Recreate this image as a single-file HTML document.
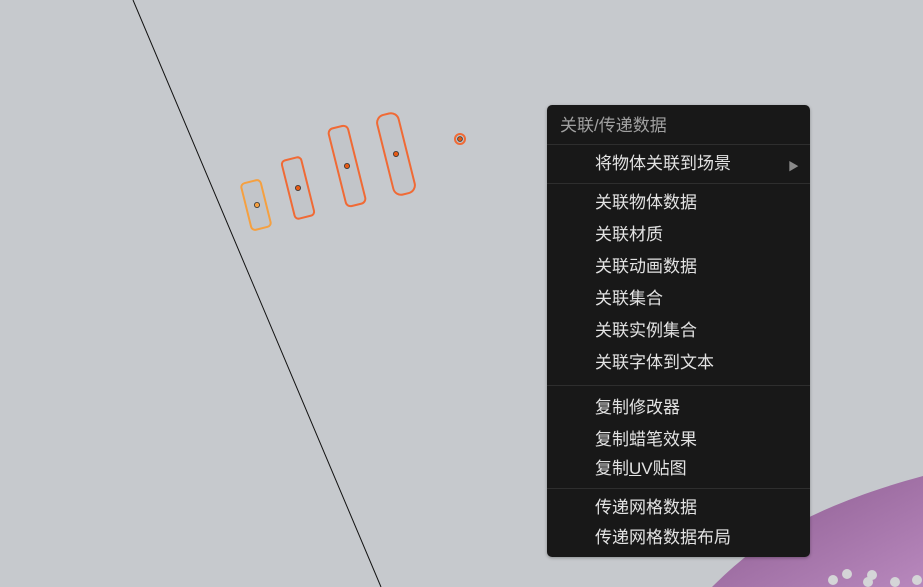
<!DOCTYPE html><html><head><meta charset="utf-8"><style>
body{margin:0;width:923px;height:587px;overflow:hidden;background:#c6c9cd;position:relative;font-family:"Liberation Sans","Noto Sans CJK SC",sans-serif}
.menu{position:absolute;left:547px;top:105px;width:263px;height:452px;background:#181818;border-radius:5px;box-shadow:0 1px 3px rgba(0,0,0,.3)}
.t{position:absolute;left:48px;color:#e2e2e2;font-size:17px;line-height:20px;white-space:nowrap}
.h{left:13px;color:#a0a0a0}
.s{position:absolute;left:0;right:0;height:1px;background:#2e2e2e}
.arr{position:absolute;right:11px;top:53px;color:#8a8a8a;font-size:11px}
</style></head><body>
<svg width="923" height="587" style="position:absolute;left:0;top:0">
<defs><linearGradient id="g" x1="0" y1="0" x2="1" y2="1"><stop offset="0" stop-color="#8a5a8e"/><stop offset="1" stop-color="#b888bd"/></linearGradient></defs>
<line x1="133" y1="0" x2="381" y2="587" stroke="#111" stroke-width="1"/>
<path d="M712 587 C745 555 790 512 923 476 L923 587 Z" fill="url(#g)"/>
<g fill="#d4d5d7"><circle cx="833" cy="580" r="5"/><circle cx="847" cy="574" r="5"/><circle cx="868" cy="582" r="5"/><circle cx="872" cy="575" r="5"/><circle cx="895" cy="582" r="5"/><circle cx="917" cy="580" r="5"/></g>
<g fill="#c2c5c9" stroke="#f06a35" stroke-width="2">
<rect x="246" y="181" width="20" height="48" rx="4" transform="rotate(-14 256 205)" stroke="#f5a040"/>
<rect x="288" y="158" width="20" height="60" rx="4" transform="rotate(-14 298 188)"/>
<rect x="337" y="126" width="20" height="80" rx="5" transform="rotate(-14 347 166)"/>
<rect x="385" y="113" width="22" height="82" rx="8" transform="rotate(-14 396 154)"/>
<circle cx="460" cy="139" r="5" fill="#c2c5c9" stroke="#f06a35" stroke-width="2"/>
</g>
<g stroke="#333" stroke-width=".8">
<circle cx="257" cy="205" r="2.6" fill="#f5a040"/><circle cx="298" cy="188" r="2.6" fill="#e55a15"/><circle cx="347" cy="166" r="2.6" fill="#e55a15"/><circle cx="396" cy="154" r="2.6" fill="#e55a15"/><circle cx="460" cy="139" r="2.4" fill="#e55a15"/>
</g></svg>
<div class="menu">
<div class="t h" style="top:11px">关联/传递数据</div>
<div class="s" style="top:39px"></div>
<div class="t" style="top:49px">将物体关联到场景</div><div class="arr">▶</div>
<div class="s" style="top:78px"></div>
<div class="t" style="top:88px">关联物体数据</div>
<div class="t" style="top:120px">关联材质</div>
<div class="t" style="top:152px">关联动画数据</div>
<div class="t" style="top:184px">关联集合</div>
<div class="t" style="top:216px">关联实例集合</div>
<div class="t" style="top:248px">关联字体到文本</div>
<div class="s" style="top:280px"></div>
<div class="t" style="top:293px">复制修改器</div>
<div class="t" style="top:325px">复制蜡笔效果</div>
<div class="t" style="top:354px">复制<u>U</u>V贴图</div>
<div class="s" style="top:383px"></div>
<div class="t" style="top:393px">传递网格数据</div>
<div class="t" style="top:423px">传递网格数据布局</div>
</div>
</body></html>
